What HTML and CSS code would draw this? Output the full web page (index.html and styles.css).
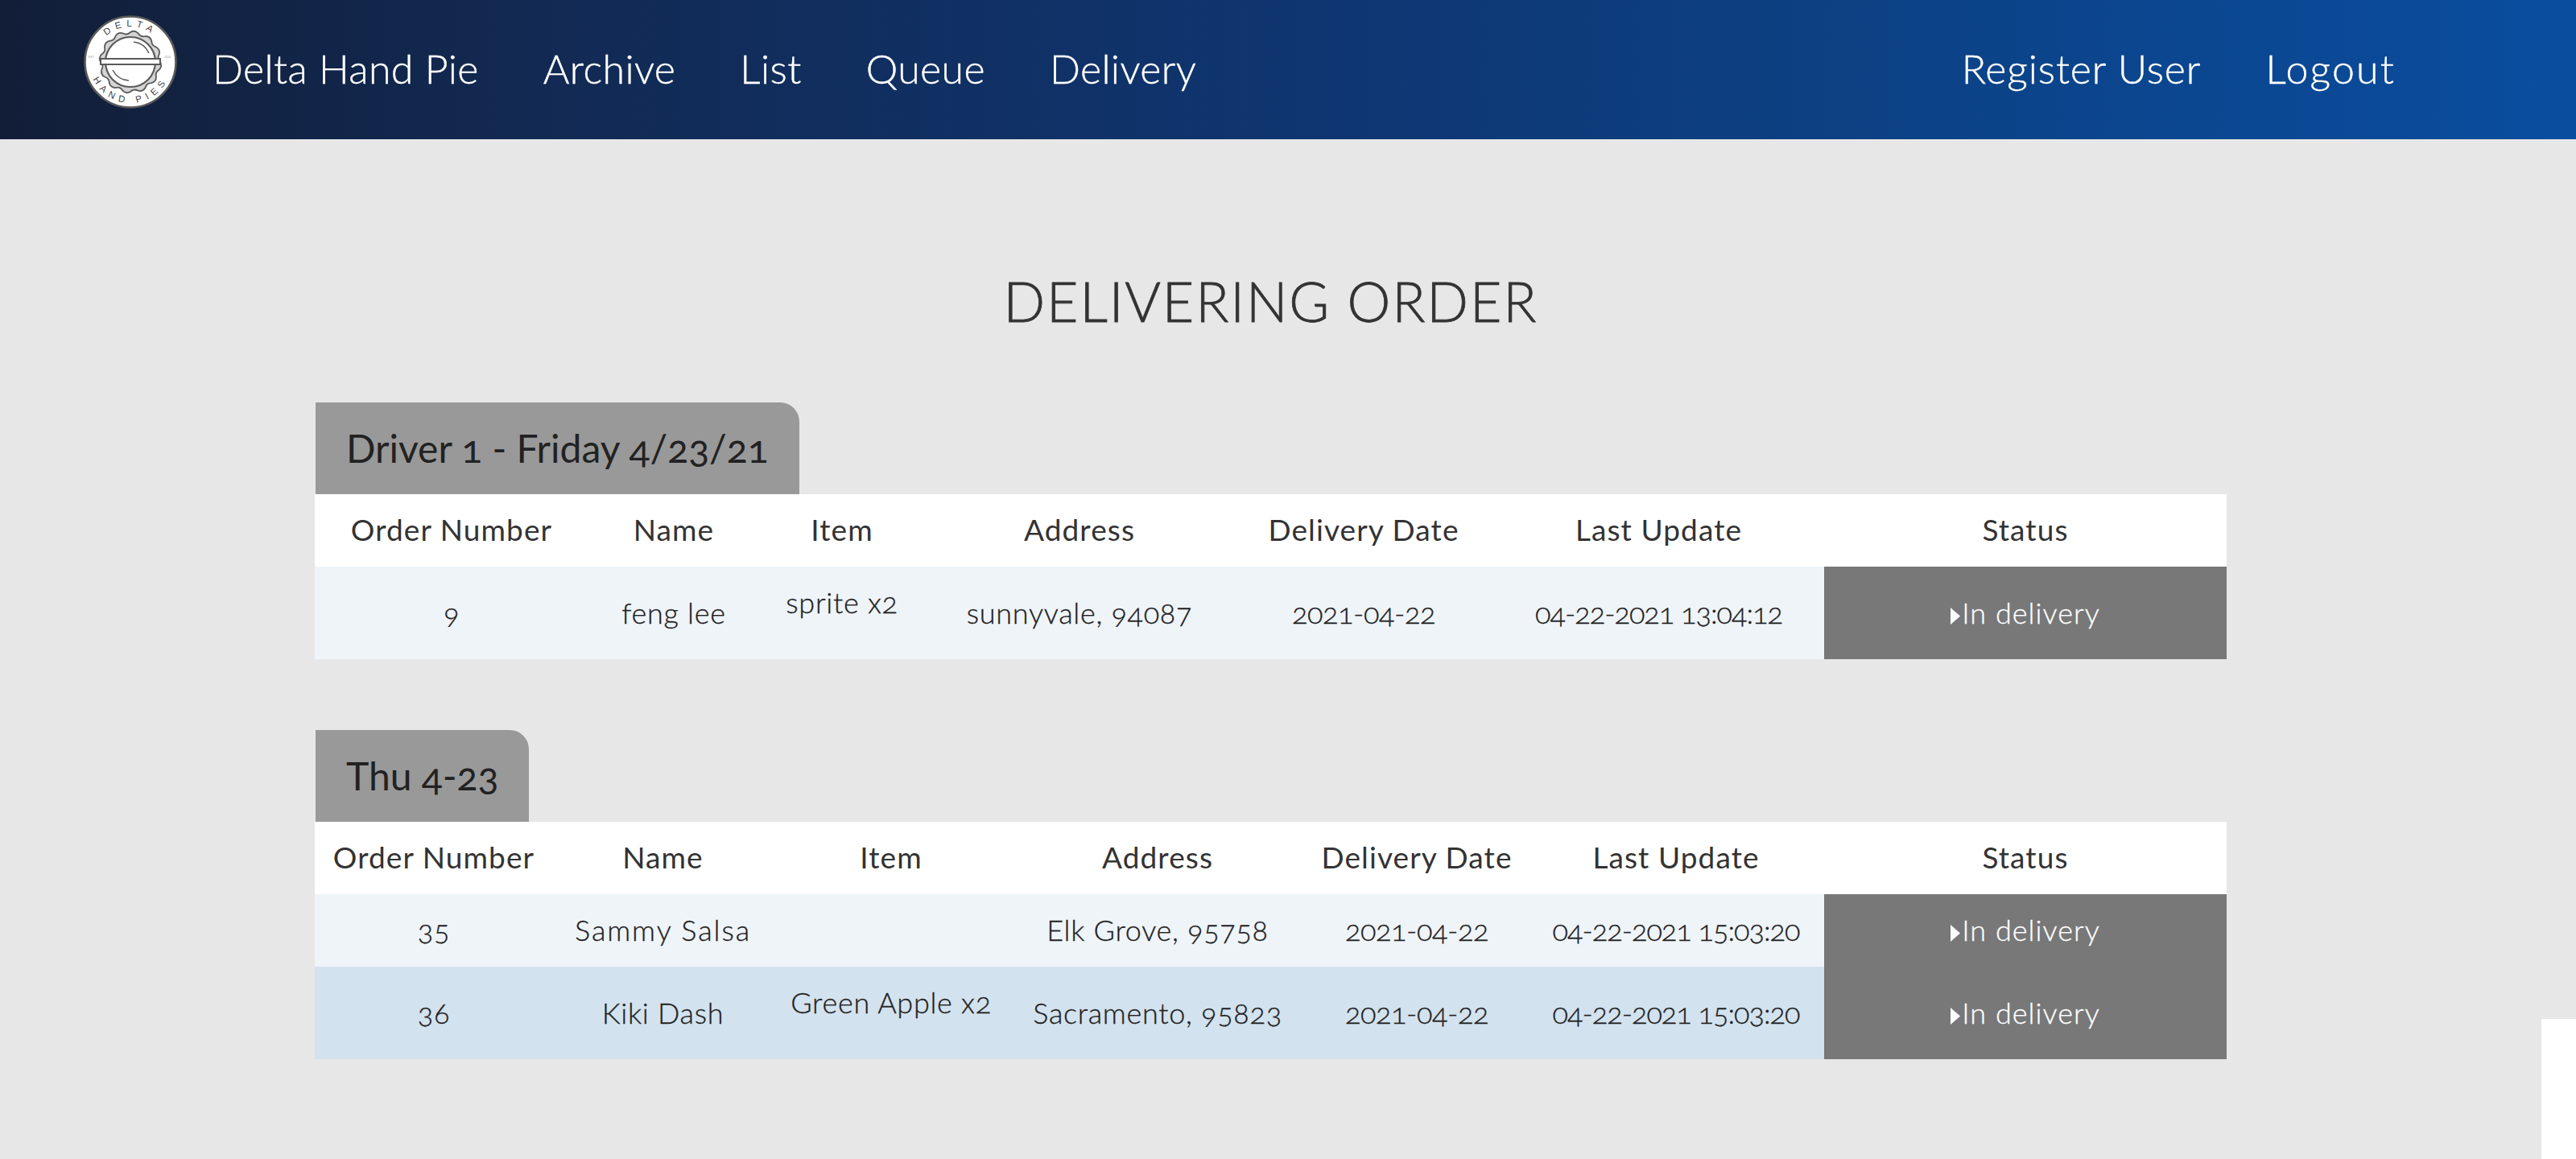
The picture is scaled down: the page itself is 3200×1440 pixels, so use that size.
FILE: index.html
```html
<!DOCTYPE html>
<html lang="en">
<head>
<meta charset="utf-8">
<title>Delivering Order</title>
<link rel="stylesheet" href="styles.css">
</head>
<body>
<header class="topbar">
  <a class="logo" href="#" aria-label="Delta Hand Pies">
    <svg class="logo-svg" viewBox="0 0 116 116">
      <defs>
        <path id="arcTop" d="M58 58 m-44 0 a44 44 0 0 1 88 0"/>
        <path id="arcBot" d="M58 58 m-51 0 a51 51 0 0 0 102 0"/>
      </defs>
      <circle cx="58" cy="58" r="56.5" fill="#fff" stroke="#5a5a5a" stroke-width="2.6"/>
      <path d="M95 58A8 8 0 0 1 93.7 67.6A8 8 0 0 0 90 76.5A8 8 0 0 1 84.2 84.2A8 8 0 0 0 76.5 90A8 8 0 0 1 67.6 93.7A8 8 0 0 0 58 95A8 8 0 0 1 48.4 93.7A8 8 0 0 0 39.5 90A8 8 0 0 1 31.8 84.2A8 8 0 0 0 26 76.5A8 8 0 0 1 22.3 67.6A8 8 0 0 0 21 58A8 8 0 0 1 22.3 48.4A8 8 0 0 0 26 39.5A8 8 0 0 1 31.8 31.8A8 8 0 0 0 39.5 26A8 8 0 0 1 48.4 22.3A8 8 0 0 0 58 21A8 8 0 0 1 67.6 22.3A8 8 0 0 0 76.5 26A8 8 0 0 1 84.2 31.8A8 8 0 0 0 90 39.5A8 8 0 0 1 93.7 48.4A8 8 0 0 0 95 58Z" fill="#d4d4d4" stroke="#5a5a5a" stroke-width="1.8"/>
      <circle cx="58" cy="58" r="31" fill="#fff" stroke="#5a5a5a" stroke-width="2.2"/>
      <rect x="21" y="54" width="74" height="7" fill="#fff" stroke="#5a5a5a" stroke-width="2"/>
      <path d="M62 33a24 24 0 0 1 19 14" fill="none" stroke="#5a5a5a" stroke-width="1.5"/>
      <path d="M36 68a24 24 0 0 0 20 13" fill="none" stroke="#5a5a5a" stroke-width="1.5"/>
      <text class="logo-text"><textPath href="#arcTop" startOffset="50%" text-anchor="middle">DELTA</textPath></text>
      <text class="logo-text"><textPath href="#arcBot" startOffset="50%" text-anchor="middle">HAND PIES</textPath></text>
      <text class="logo-tiny" x="6" y="53">EST</text>
      <text class="logo-tiny" x="100" y="53">2020</text>
    </svg>
  </a>
  <nav class="nav-main">
    <a class="nav-link" href="#">Delta Hand Pie</a>
    <a class="nav-link" href="#">Archive</a>
    <a class="nav-link" href="#">List</a>
    <a class="nav-link" href="#">Queue</a>
    <a class="nav-link" href="#">Delivery</a>
  </nav>
  <nav class="nav-user">
    <a class="nav-link" href="#">Register User</a>
    <a class="nav-link logout" href="#">Logout</a>
  </nav>
</header>

<div class="page">
  <main class="content">
    <h1 class="page-title">DELIVERING ORDER</h1>

    <section class="group">
      <h2 class="tab">Driver 1 - Friday 4/23/21</h2>
      <table class="orders first">
        <colgroup><col class="c1"><col class="c2"><col class="c3"><col class="c4"><col class="c5"><col class="c6"><col class="c7"></colgroup>
        <thead>
          <tr><th>Order Number</th><th>Name</th><th>Item</th><th>Address</th><th>Delivery Date</th><th>Last Update</th><th>Status</th></tr>
        </thead>
        <tbody>
          <tr class="odd">
            <td>9</td><td>feng lee</td><td><p class="item">sprite x2</p></td><td>sunnyvale, 94087</td><td class="day">2021-04-22</td><td class="when">04-22-2021 13:04:12</td>
            <td class="status"><svg class="caret" viewBox="0 0 10 20" preserveAspectRatio="none"><path d="M0 0L10 10L0 20Z"/></svg>In delivery</td>
          </tr>
        </tbody>
      </table>
    </section>

    <section class="group">
      <h2 class="tab">Thu 4-23</h2>
      <table class="orders second">
        <colgroup><col class="c1"><col class="c2"><col class="c3"><col class="c4"><col class="c5"><col class="c6"><col class="c7"></colgroup>
        <thead>
          <tr><th>Order Number</th><th>Name</th><th>Item</th><th>Address</th><th>Delivery Date</th><th>Last Update</th><th>Status</th></tr>
        </thead>
        <tbody>
          <tr class="odd">
            <td>35</td><td class="wide">Sammy Salsa</td><td></td><td>Elk Grove, 95758</td><td class="day">2021-04-22</td><td class="when">04-22-2021 15:03:20</td>
            <td class="status"><svg class="caret" viewBox="0 0 10 20" preserveAspectRatio="none"><path d="M0 0L10 10L0 20Z"/></svg>In delivery</td>
          </tr>
          <tr class="even">
            <td>36</td><td>Kiki Dash</td><td><p class="item">Green Apple x2</p></td><td>Sacramento, 95823</td><td class="day">2021-04-22</td><td class="when">04-22-2021 15:03:20</td>
            <td class="status"><svg class="caret" viewBox="0 0 10 20" preserveAspectRatio="none"><path d="M0 0L10 10L0 20Z"/></svg>In delivery</td>
          </tr>
        </tbody>
      </table>
    </section>
  </main>
  <div class="filler"></div>
</div>
</body>
</html>
```
FILE: styles.css
```css
* { box-sizing: border-box; }
html, body { margin: 0; padding: 0; background: #fff; }
body {
  font-family: "Lato", "Open Sans", sans-serif;
  font-variant-numeric: oldstyle-nums;
  color: #333;
  overflow: hidden;
}

.topbar {
  height: 173px;
  display: flex;
  align-items: center;
  padding-left: 104px;
  background: linear-gradient(to right, #121e38 0%, #122a54 22%, #0f3570 50%, #0c4184 72%, #0a4d9f 100%);
}
.logo { display: block; width: 116px; height: 116px; margin-right: 4px; margin-top: -20px; }
.logo-svg { display: block; width: 116px; height: 116px; }
.logo-text { font: 400 11.5px "Liberation Sans", sans-serif; letter-spacing: 6px; fill: #444; }
.logo-tiny { font: 400 3.6px "Liberation Sans", sans-serif; fill: #999; }

.nav-main, .nav-user { display: flex; margin-top: -4px; }
.nav-user { margin-left: auto; margin-right: 184px; }
.nav-link {
  font-size: 50px;
  font-weight: 300;
  line-height: 60px;
  letter-spacing: 0.4px;
  -webkit-text-stroke: 0.4px #fff;
  color: #fff;
  text-decoration: none;
  padding: 0 40px;
}
.nav-user .nav-link { letter-spacing: 0.9px; }
.nav-user .logout { letter-spacing: 2.2px; }

.page { display: flex; align-items: flex-start; }
.content { flex: none; width: 3157px; height: 1267px; padding: 0 391px; background: #e7e7e7; }
.filler { flex: 1; height: 1093px; background: #e7e7e7; }

.page-title {
  margin: 0;
  padding-top: 160px;
  height: 327px;
  font-size: 68px;
  line-height: 82px;
  font-weight: 300;
  letter-spacing: 1.9px;
  -webkit-text-stroke: 0.8px #333;
  color: #333;
  text-align: center;
}
.group { margin-bottom: 88px; }
.tab {
  display: inline-block;
  vertical-align: bottom;
  margin: 0 0 0 1px;
  padding: 32px 38px 0;
  height: 114px;
  font-size: 48px;
  line-height: 50px;
  font-weight: 400;
  color: #222;
  background: #999;
  border-top-right-radius: 24px;
}

.orders {
  display: table;
  width: 2375px;
  border-collapse: collapse;
  table-layout: fixed;
  background: #fff;
}
.first .c1 { width: 340px; }
.first .c2 { width: 212px; }
.first .c3 { width: 206px; }
.first .c4 { width: 384px; }
.first .c5 { width: 322px; }
.first .c6 { width: 411px; }
.second .c1 { width: 296px; }
.second .c2 { width: 273px; }
.second .c3 { width: 294px; }
.second .c4 { width: 368px; }
.second .c5 { width: 276px; }
.second .c6 { width: 368px; }
.c7 { width: 500px; }

.orders th, .orders td {
  padding: 23px 0 25px;
  height: 90px;
  line-height: 42px;
  text-align: center;
  vertical-align: middle;
  white-space: nowrap;
}
.orders th { font-size: 37px; font-weight: 400; letter-spacing: 1.1px; color: #333; background: #fff; }
.orders td { font-size: 36px; font-weight: 300; letter-spacing: 0.7px; color: #222; -webkit-text-stroke: 0.3px #222; }
.orders .day { letter-spacing: -0.4px; }
.orders .when { letter-spacing: -1px; }
.orders .wide { letter-spacing: 1.9px; }
.odd td { background: #eff4f9; }
.even td { background: #d3e2ef; }
.item { margin: 0 0 25px; }
.orders .status { background: #787878; color: #fff; -webkit-text-stroke: 0.3px #fff; letter-spacing: 1px; }
.caret { display: inline-block; width: 12px; height: 21px; margin-right: 2px; fill: #fff; vertical-align: -1px; }
```
